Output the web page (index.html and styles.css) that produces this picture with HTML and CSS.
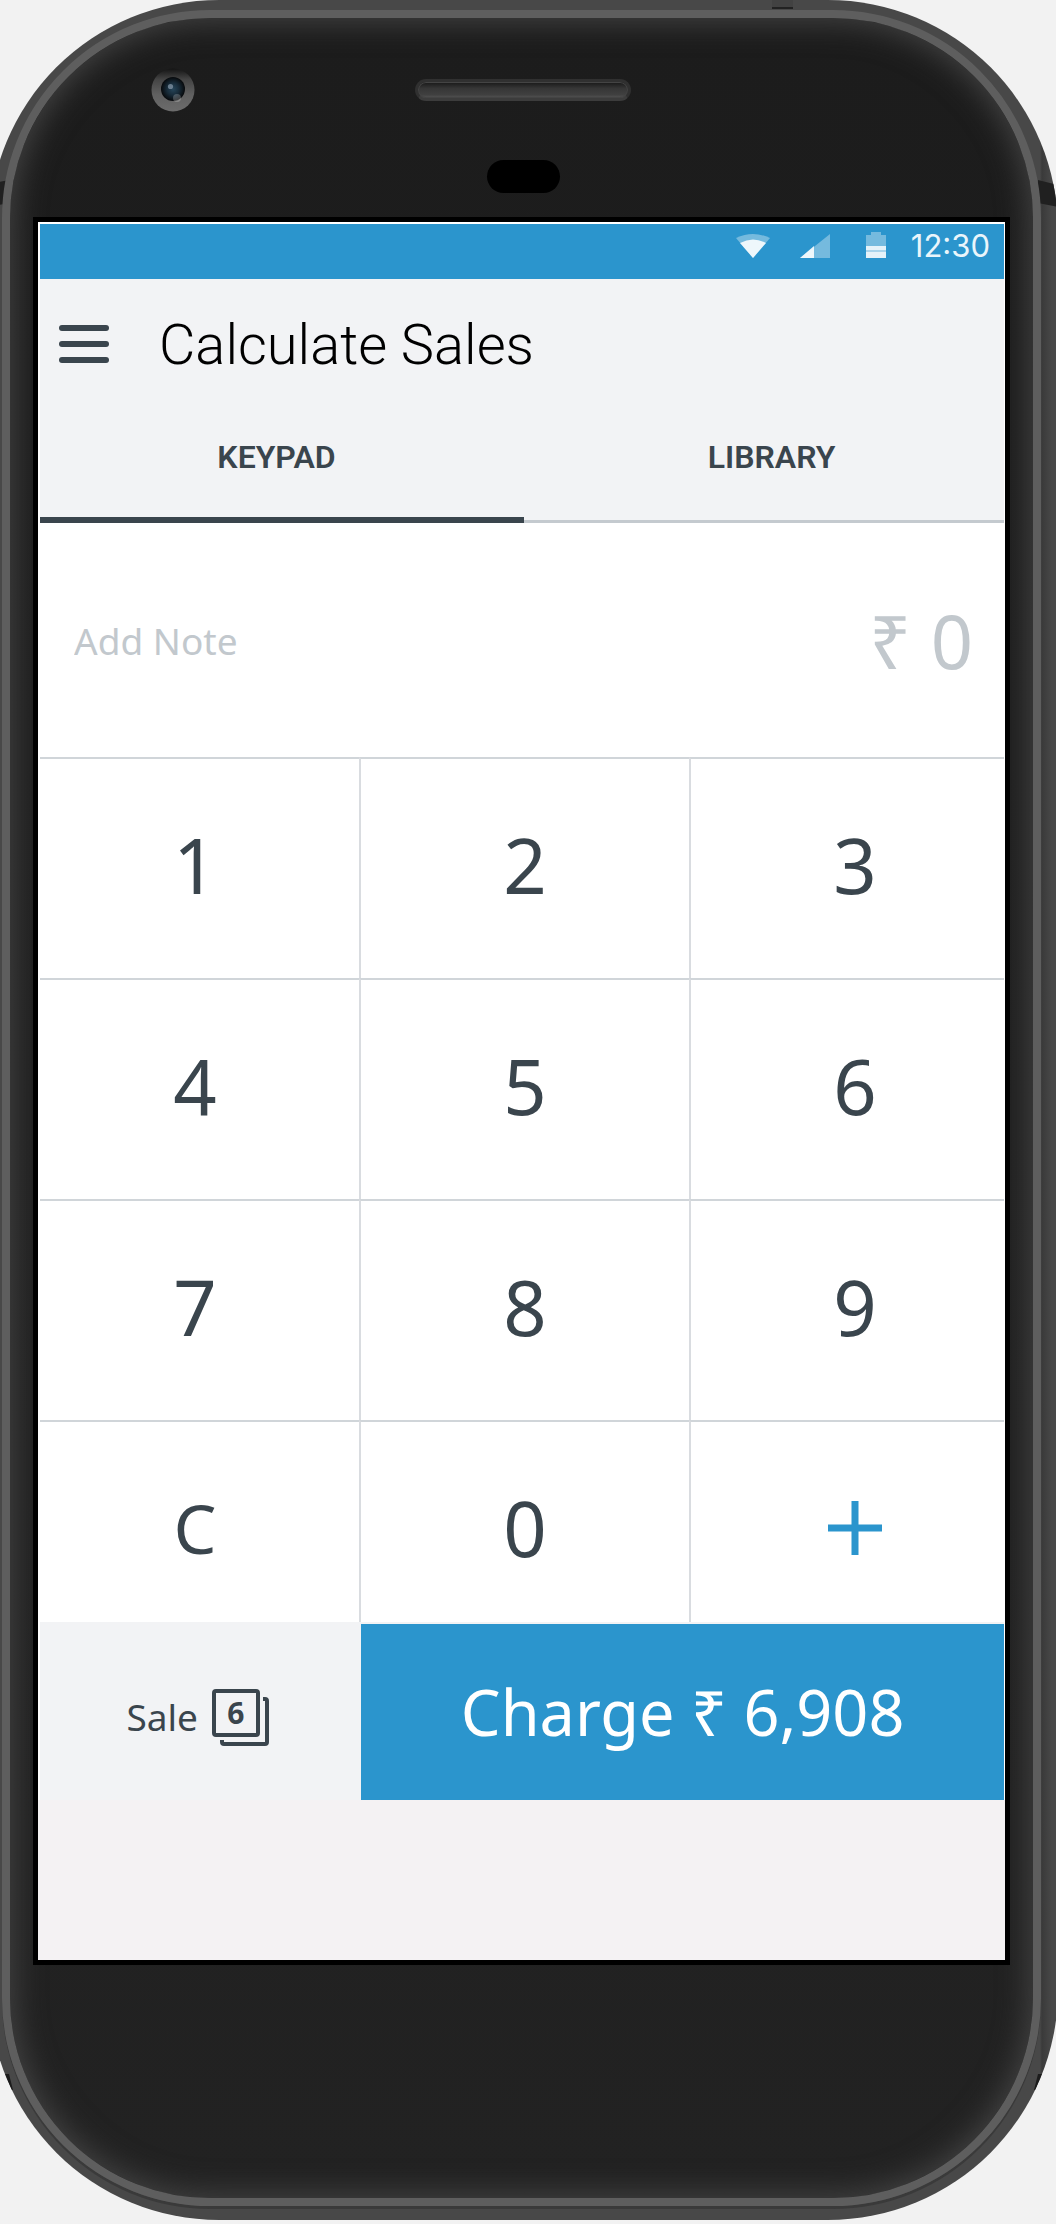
FILE: index.html
```html
<!DOCTYPE html>
<html lang="en">
<head>
<meta charset="utf-8">
<meta name="viewport" content="width=device-width, initial-scale=1">
<title>Calculate Sales</title>
<link rel="stylesheet" href="styles.css">
</head>
<body>
<div class="phone">
  <span class="band band-left"></span>
  <span class="band band-right"></span>
  <span class="nick nick-left"></span>
  <span class="nick nick-right"></span>
  <span class="port"></span>
  <div class="bezel">
    <div class="hardware">
      <svg class="camera" viewBox="0 0 44 44" aria-hidden="true">
        <defs>
          <linearGradient id="ring" x1="0" y1="0" x2="0" y2="1">
            <stop offset="0" stop-color="#141414"/>
            <stop offset=".25" stop-color="#444"/>
            <stop offset=".6" stop-color="#606060"/>
            <stop offset="1" stop-color="#6c6c6c"/>
          </linearGradient>
          <radialGradient id="lens">
            <stop offset="0" stop-color="#27465a"/>
            <stop offset=".5" stop-color="#182c3a"/>
            <stop offset="1" stop-color="#07090b"/>
          </radialGradient>
        </defs>
        <circle cx="22" cy="22" r="21.5" fill="url(#ring)"/>
        <circle cx="22" cy="21" r="12" fill="url(#lens)"/>
        <circle cx="19.500" cy="18.500" r="2.600" fill="#7d90a0" opacity=".8"/>
        <circle cx="26" cy="30" r="4" fill="#fff" opacity=".22"/>
      </svg>
      <div class="speaker"></div>
      <div class="sensor"></div>
    </div>
    <main class="screen">
      <div class="app">
        <div class="status">
          <svg class="wifi" viewBox="0 0 34 24" aria-hidden="true">
            <path d="M0 4Q17-4 34 4L17 24Z" fill="#fff" opacity=".35"/>
            <path d="M4 9Q17 2 30 9L17 24Z" fill="#fff" opacity=".88"/>
          </svg>
          <svg class="signal" viewBox="0 0 30 24" aria-hidden="true">
            <path d="M0 24L30 0V24Z" fill="#fff" opacity=".35"/>
            <path d="M0 24L14 12V24Z" fill="#fff" opacity=".88"/>
          </svg>
          <svg class="battery" viewBox="0 0 20 26" aria-hidden="true">
            <path d="M5 0H15V3H20V14H0V3H5Z" fill="#fff" opacity=".35"/>
            <path d="M0 18H20V20H0Z" fill="#fff" opacity=".6"/>
            <path d="M0 14H20V18H0ZM0 20H20V26H0Z" fill="#fff" opacity=".88"/>
          </svg>
          <time class="clock">12:30</time>
        </div>
        <header class="title-bar">
          <button class="menu" aria-label="Menu"><span></span><span></span><span></span></button>
          <h1>Calculate Sales</h1>
        </header>
        <nav class="tabs">
          <button class="tab active">KEYPAD</button>
          <button class="tab">LIBRARY</button>
        </nav>
        <div class="entry">
          <input class="note" type="text" placeholder="Add Note" aria-label="Add Note">
          <output class="amount">₹ 0</output>
        </div>
        <div class="keypad">
          <button>1</button><button>2</button><button>3</button>
          <button>4</button><button>5</button><button>6</button>
          <button>7</button><button>8</button><button>9</button>
          <button class="clear">C</button><button>0</button>
          <button aria-label="Add"><svg class="plus" viewBox="0 0 54 54"><path d="M27 0V54M0 27H54" stroke="#2b95cd" stroke-width="7"/></svg></button>
        </div>
        <footer class="actions">
          <button class="sale">
            <span>Sale</span>
            <span class="stack">
              <svg viewBox="0 0 57 57" aria-hidden="true">
                <rect x="2" y="2" width="44" height="44" rx="2" fill="none" stroke="#3a454d" stroke-width="4"/>
                <path d="M51 10H53Q55 10 55 12V53Q55 55 53 55H12Q10 55 10 53V51" fill="none" stroke="#3a454d" stroke-width="4"/>
              </svg>
              <span class="count">6</span>
            </span>
          </button>
          <button class="charge">Charge ₹ 6,908</button>
        </footer>
      </div>
    </main>
  </div>
</div>
</body>
</html>
```
FILE: styles.css
```css
* { box-sizing: border-box; }

body {
  margin: 0;
  background: #f2f2f2;
  color: #3a454d;
  font-family: "Noto Sans", sans-serif;
  overflow-x: hidden;
}

button {
  margin: 0;
  padding: 0;
  border: 0;
  background: none;
  color: inherit;
  font: inherit;
}

/* Device body */
.phone {
  position: relative;
  margin: 0 -2px 4px -11px;
  padding: 10px 17px 14px 13px;
  border-radius: 230px;
  background: linear-gradient(to right, #484848 97%, #484848 calc(100% - 18px), #3a3a3a calc(100% - 16px), #484848 calc(100% - 6px));
  overflow: hidden;
}

.band {
  position: absolute;
  top: 180px;
  width: 20px;
  height: 27px;
  background: #202020;
}
.band-left { left: 0; clip-path: polygon(0 4px, 100% 0, 100% 23px, 0 100%); }
.band-right { right: 0; clip-path: polygon(0 0, 100% 5px, 100% 100%, 0 23px); }

.nick {
  position: absolute;
  bottom: 130px;
  width: 8px;
  height: 16px;
  background: #1c1c1c;
}
.nick-left { left: 16px; clip-path: polygon(0 0, 50% 0, 100% 100%, 80% 100%); }
.nick-right { right: 16px; clip-path: polygon(50% 0, 100% 0, 20% 100%, 0 100%); }

.port {
  position: absolute;
  top: 0;
  right: 265px;
  width: 21px;
  height: 9px;
  background: #424242;
  border-bottom: 2px solid #222;
}

.bezel {
  position: relative;
  padding: 0 23px 233px 23px;
  border: 8px solid #5e5e5e;
  border-radius: 208px;
  background: linear-gradient(#1c1c1c, #222);
  box-shadow: inset 0 0 30px 4px #444, 0 3px 0 #3a3a3a;
}

.hardware {
  display: grid;
  grid-template-columns: 1fr 216px 1fr;
  row-gap: 48px;
  align-items: center;
  justify-items: center;
  padding: 50px 0 24px 3px;
}

.camera {
  width: 44px;
  height: 44px;
  margin-left: 115px;
  justify-self: start;
}

.speaker {
  width: 216px;
  height: 22px;
  border: 3px solid #303030;
  border-bottom-color: #3c3c3c;
  border-radius: 11px;
  background: linear-gradient(#181818, #363636 40%, #404040 80%, #555);
  box-shadow: inset 0 0 0 1px #444;
}

.sensor {
  grid-column: 2;
  width: 73px;
  height: 33px;
  border-radius: 17px;
  background: #000;
}

/* App screen */
.screen {
  padding-top: 2px;
  border: 5px solid #000;
  background: #fff;
}
.app {
  margin: 0 1px 0 2px;
  overflow: hidden;
}

.status {
  display: flex;
  align-items: flex-start;
  justify-content: flex-end;
  height: 55px;
  padding: 8px 14px 0 0;
  background: #2b95cd;
  color: #eaf5fb;
}
.status svg { flex: none; }
.wifi { width: 34px; height: 24px; margin: 2px 30px 0 0; }
.signal { width: 30px; height: 24px; margin: 2px 36px 0 0; }
.battery { width: 20px; height: 26px; margin-right: 25px; }
.clock { font: 400 31px/28px Inter, sans-serif; }

.title-bar {
  display: flex;
  align-items: center;
  gap: 50px;
  height: 130px;
  padding-left: 19px;
  background: #f2f3f5;
}
.menu {
  display: flex;
  flex-direction: column;
  gap: 10px;
  width: 50px;
}
.menu span {
  height: 6px;
  border-radius: 3px;
  background: #3a454d;
}
h1 {
  margin: 0;
  padding-top: 2px;
  color: #000;
  font: 300 56px/64px Roboto, sans-serif;
}

/* Tabs and keys run a little past the screen edges */
.tabs, .keypad {
  display: grid;
  margin: 0 -15px 0 -11px;
}
.tabs {
  grid-template-columns: 1fr 1fr;
  background: #f2f3f5;
}
.tab {
  height: 114px;
  padding-bottom: 18px;
  font: 600 32px/36px Roboto, sans-serif;
  box-shadow: inset 0 -3px 0 #c4cacf;
}
.tab.active { box-shadow: inset 0 -6px 0 #3a454d; }

.entry {
  display: flex;
  align-items: center;
  justify-content: space-between;
  height: 234px;
  padding: 2px 31px 0 34px;
}
.note {
  flex: 1;
  min-width: 0;
  padding: 0;
  border: 0;
  background: none;
  font: 400 37px/48px "Noto Sans", sans-serif;
  color: #3a454d;
}
.note::placeholder { color: #c2c8cd; opacity: 1; }
.amount {
  color: #c2c8cd;
  font-size: 74px;
  line-height: 96px;
}

.keypad {
  grid-template-columns: repeat(3, 1fr);
  grid-template-rows: repeat(3, 221px) 202px;
}
.keypad button {
  padding-bottom: 8px;
  border-top: 2px solid #d0d5d9;
  border-left: 2px solid #d9dce0;
  font-size: 76px;
  line-height: 96px;
}
.keypad button:nth-child(n+10) { padding: 12px 0 0; }
.keypad .clear { font-size: 68px; }
.plus { display: block; width: 54px; height: 54px; margin: 0 auto; }

.actions {
  display: grid;
  grid-template-columns: 1fr 2fr;
  height: 178px;
  background: #f2f3f5;
}
.sale {
  display: flex;
  align-items: center;
  justify-content: center;
  gap: 14px;
  padding: 12px 6px 0 0;
  font-size: 37px;
  line-height: 48px;
}
.stack { position: relative; width: 57px; height: 57px; }
.stack svg { display: block; }
.count {
  position: absolute;
  inset: 0 9px 9px 0;
  font-size: 30px;
  line-height: 48px;
  font-weight: 700;
  text-align: center;
}
.charge {
  background: #2b95cd;
  border-top: 2px solid #f2f3f5;
  color: #fff;
  font-size: 63px;
  line-height: 80px;
}
.screen::after {
  content: "";
  display: block;
  height: 160px;
  background: #f4f2f3;
}
```
